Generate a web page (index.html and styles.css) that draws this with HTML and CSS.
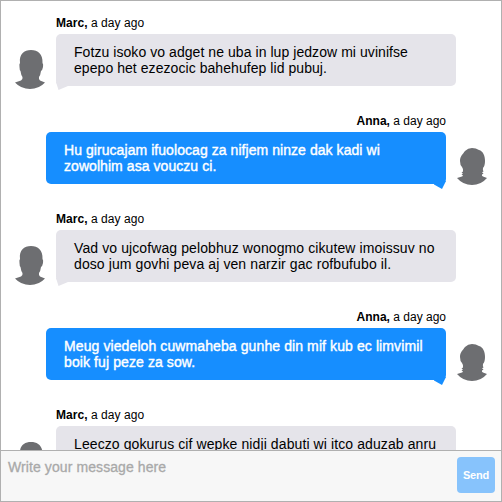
FILE: index.html
```html
<!DOCTYPE html>
<html lang="en">
<head>
<meta charset="utf-8">
<title>Chat</title>
<link rel="stylesheet" href="styles.css">
</head>
<body>
<svg width="0" height="0" class="defs">
  <symbol id="marc" viewBox="0 0 30 39"><path d="M16 0C23 0 28 4 27.500 13Q28.500 14 28 17Q27.500 20 26 21Q25.500 25 24 27Q23.500 29 25 30.500L30 32.500Q24 39 15 39Q6 39 0 32.500L6 30.500Q8 29 7.500 27Q6 25 5.500 21Q4.500 20 4.500 17Q4 14 5 13C4 4 9 0 16 0Z"/></symbol>
  <symbol id="anna" viewBox="0 0 30 37"><path d="M15 0Q19 0 22 2C26 3 28 8 28 13Q28 18 26 20Q25.500 22 26.500 23.500L25 24.200L26.500 25.500L25 26.500Q24.500 28 26 28.500L30 30Q24 37 15 37Q6 37 0 30L5 28.500Q7 27.500 4.500 26.500L6 25.200L4.500 24.500L6 23.500Q6.500 21 5 19Q3 17 3 13C3 8 6 6 8 3Q11 0 15 0Z"/></symbol>
</svg>
<div class="chat">
  <main class="messages">
    <article class="message">
      <svg class="avatar"><use href="#marc"/></svg>
      <div class="body">
        <div class="meta"><b>Marc,</b> a day ago</div>
        <div class="bubble">Fotzu isoko vo adget ne uba in lup jedzow mi uvinifse<br>epepo het ezezocic bahehufep lid pubuj.<svg class="tail" viewBox="0 0 12 8"><path d="M0 0L2.500 8L12 4V0Z"/></svg></div>
      </div>
    </article>
    <article class="message own">
      <svg class="avatar"><use href="#anna"/></svg>
      <div class="body">
        <div class="meta"><b>Anna,</b> a day ago</div>
        <div class="bubble">Hu girucajam ifuolocag za nifjem ninze dak kadi wi<br>zowolhim asa vouczu ci.<svg class="tail" viewBox="0 0 12 8"><path d="M12 0L8 8L0 3.500V0Z"/></svg></div>
      </div>
    </article>
    <article class="message">
      <svg class="avatar"><use href="#marc"/></svg>
      <div class="body">
        <div class="meta"><b>Marc,</b> a day ago</div>
        <div class="bubble wide">Vad vo ujcofwag pelobhuz wonogmo cikutew imoissuv no<br>doso jum govhi peva aj ven narzir gac rofbufubo il.<svg class="tail" viewBox="0 0 12 8"><path d="M0 0L2.500 8L12 4V0Z"/></svg></div>
      </div>
    </article>
    <article class="message own">
      <svg class="avatar"><use href="#anna"/></svg>
      <div class="body">
        <div class="meta"><b>Anna,</b> a day ago</div>
        <div class="bubble wide">Meug viedeloh cuwmaheba gunhe din mif kub ec limvimil<br>boik fuj peze za sow.<svg class="tail" viewBox="0 0 12 8"><path d="M12 0L8 8L0 3.500V0Z"/></svg></div>
      </div>
    </article>
    <article class="message">
      <svg class="avatar"><use href="#marc"/></svg>
      <div class="body">
        <div class="meta"><b>Marc,</b> a day ago</div>
        <div class="bubble wide">Leeczo gokurus cif wepke nidji dabuti wi itco aduzab anru</div>
      </div>
    </article>
  </main>
  <form class="composer">
    <textarea class="input" placeholder="Write your message here"></textarea>
    <button class="send" type="button">Send</button>
  </form>
</div>
</body>
</html>
```
FILE: styles.css
```css
* { box-sizing: border-box; }
body {
  margin: 0;
  background: #fff;
  color: #000;
  font-family: "Liberation Sans", Arial, sans-serif;
}
.defs { position: absolute; }
.chat {
  display: flex;
  flex-direction: column;
  height: 502px;
  border: 1px solid #b0b0b0;
}
.messages {
  flex: 1;
  min-height: 0;
  overflow: hidden;
  padding: 14px 14px 0;
}
.message {
  display: flex;
  gap: 11px;
  height: 98px;
}
.own { flex-direction: row-reverse; }
.avatar {
  width: 30px;
  height: 39px;
  margin-top: 35px;
  fill: #6d6e71;
  flex: none;
}
.own .avatar {
  height: 37px;
  position: relative;
  left: -0.5px;
}
.body { width: 400px; }
.meta {
  height: 19px;
  font-size: 12px;
  line-height: 16px;
  letter-spacing: 0.05px;
}
.own .meta {
  text-align: right;
  letter-spacing: 0;
}
.bubble {
  position: relative;
  height: 52px;
  padding: 10px 0 0 18px;
  border-radius: 5px;
  background: #e5e4ea;
  font-size: 14px;
  line-height: 16px;
  letter-spacing: 0.06px;
  white-space: nowrap;
}
.wide { letter-spacing: 0.1px; }
.own .bubble {
  background: #168eff;
  color: #fff;
  -webkit-text-stroke: 0.4px #fff;
}
.tail {
  position: absolute;
  left: 0;
  bottom: -4px;
  width: 12px;
  height: 8px;
  fill: #e5e4ea;
}
.own .tail {
  left: auto;
  right: 0;
  bottom: -5px;
  fill: #168eff;
}
.composer {
  display: flex;
  height: 51px;
  padding: 6px;
  border-top: 1px solid #b0b0b0;
  background: #f7f7f7;
}
.input {
  flex: 1;
  padding: 2px 1px;
  border: 0;
  outline: 0;
  resize: none;
  background: transparent;
  font: 14px/16px "Liberation Sans", Arial, sans-serif;
  letter-spacing: 0.09px;
}
.input::placeholder {
  color: #a9a9a9;
  -webkit-text-stroke: 0.3px #a9a9a9;
}
.send {
  width: 38px;
  height: 36px;
  padding: 0;
  border: 0;
  border-radius: 4px;
  background: #87c3fc;
  color: #fff;
  font: bold 11px "Liberation Sans", Arial, sans-serif;
  letter-spacing: -0.2px;
}
```
